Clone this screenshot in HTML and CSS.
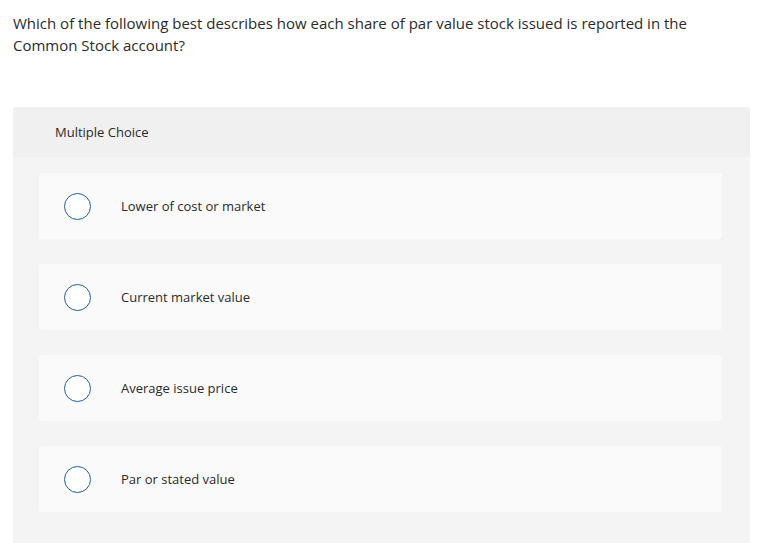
FILE: index.html
```html
<!DOCTYPE html>
<html>
<head>
<meta charset="utf-8">
<link rel="stylesheet" href="styles.css">
</head>
<body>
<div class="page">
  <p class="question">Which of the following best describes how each share of par value stock issued is reported in the Common Stock account?</p>
  <div class="panel">
    <div class="panel-head">Multiple Choice</div>
    <div class="panel-body">
      <div class="option"><span class="radio"></span><span class="label">Lower of cost or market</span></div>
      <div class="option"><span class="radio"></span><span class="label">Current market value</span></div>
      <div class="option"><span class="radio"></span><span class="label">Average issue price</span></div>
      <div class="option"><span class="radio"></span><span class="label">Par or stated value</span></div>
    </div>
  </div>
</div>
</body>
</html>
```

FILE: styles.css
```css
html, body { margin: 0; padding: 0; background: #fff; }
body { font-family: "Open Sans", "Liberation Sans", sans-serif; color: #2b2b2b; }
.page { padding: 12px 27px 0 13px; }
.question {
  margin: 0;
  font-size: 15px;
  line-height: 22px;
  width: 700px;
}
.panel {
  margin-top: 51px;
  width: 737px;
  border-radius: 3px 3px 0 0;
  overflow: hidden;
}
.panel-head {
  background: #f0f0f0;
  height: 50px;
  box-sizing: border-box;
  padding-left: 42px;
  display: flex;
  align-items: center;
  font-size: 13px;
}
.panel-body {
  background: #f4f4f4;
  padding: 16px 28px 40px 26px;
  display: flex;
  flex-direction: column;
  gap: 25px;
}
.option {
  background: #fafafa;
  border-radius: 3px;
  height: 66px;
  display: flex;
  align-items: center;
  padding-left: 25px;
}
.radio {
  width: 25px;
  height: 25px;
  border: 1.5px solid #1f5e9c;
  border-radius: 50%;
  background: #fff;
  flex: none;
}
.label {
  margin-left: 30px;
  font-size: 13px;
}
```
